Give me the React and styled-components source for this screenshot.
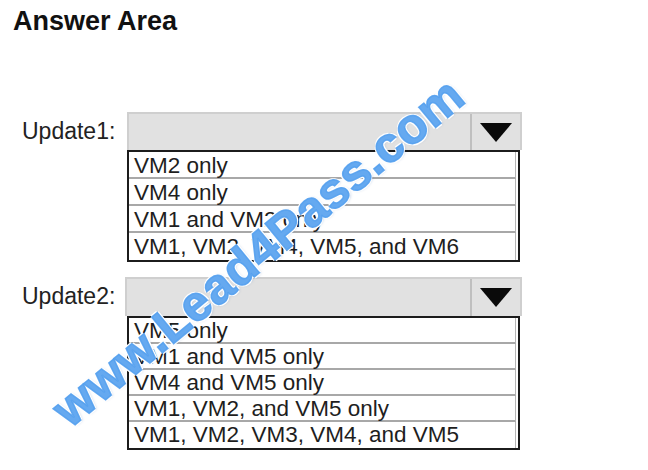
import styled, { createGlobalStyle } from 'styled-components';

const GlobalStyle = createGlobalStyle`
  html, body {
    margin: 0;
    padding: 0;
    background: #ffffff;
  }
  body {
    font-family: "Liberation Sans", Arial, sans-serif;
    color: #1a1a1a;
  }
`;

const Page = styled.div`
  position: relative;
  width: 648px;
  height: 470px;
  overflow: hidden;
  background: #fff;
`;

const Title = styled.h1`
  margin: 0;
  padding: 6px 0 0 13px;
  font-size: 27px;
  font-weight: 700;
  line-height: 31px;
  color: #111;
`;

const Form = styled.div`
  display: flex;
  flex-direction: column;
  gap: 15px;
  padding: 75px 0 0 22px;
`;

const Row = styled.div`
  display: grid;
  grid-template-columns: 105px auto;
  align-items: start;
`;

const Label = styled.div`
  height: 38px;
  display: flex;
  align-items: center;
  font-size: 23px;
  color: #222;
`;

const Select = styled.div`
  display: flex;
  flex-direction: column;
  width: 395px;
`;

const Header = styled.div`
  display: flex;
  height: ${(p) => p.$height}px;
  box-sizing: border-box;
  background: #e1e1e1;
  border: 2px solid #cfcfcf;
  border-bottom: none;
  margin-left: ${(p) => p.$shift}px;
`;

const Field = styled.div`
  flex: 1;
`;

const Toggle = styled.div`
  width: 48px;
  display: flex;
  align-items: center;
  justify-content: center;
  border-left: 2px solid #bfbfbf;
`;

const Arrow = styled.div`
  width: 0;
  height: 0;
  border-left: 16px solid transparent;
  border-right: 16px solid transparent;
  border-top: 19px solid #0a0a0a;
`;

const List = styled.div`
  width: 393px;
  box-sizing: border-box;
  border: 2px solid #1c1c1c;
  background: #fff;
  padding-right: 2px;
`;

const Option = styled.div`
  height: ${(p) => p.$height}px;
  line-height: ${(p) => p.$height}px;
  box-sizing: border-box;
  padding-left: 5px;
  font-size: 22.5px;
  color: #1e1e1e;
  white-space: nowrap;
  border-right: 1px solid #b5b5b5;
  border-bottom: 2px solid #a8a8a8;

  &:last-child {
    border-bottom: none;
  }
`;

const Watermark = styled.div`
  position: absolute;
  left: 258px;
  top: 252px;
  transform: translate(-50%, -50%) rotate(-39.5deg);
  font-family: "Liberation Sans", Arial, sans-serif;
  font-weight: 700;
  font-size: 50px;
  letter-spacing: 0.5px;
  white-space: nowrap;
  color: rgba(84, 160, 238, 0.9);
  -webkit-text-stroke: 1.5px rgba(84, 160, 238, 0.9);
  text-shadow:
    2px 0 0 #fff,
    -2px 0 0 #fff,
    0 2px 0 #fff,
    0 -2px 0 #fff,
    1px 1px 3px rgba(40, 90, 160, 0.35);
  pointer-events: none;
`;

const questions = [
  {
    label: 'Update1:',
    headerHeight: 38,
    shift: 0,
    rowHeight: 27,
    options: ['VM2 only', 'VM4 only', 'VM1 and VM2 only', 'VM1, VM2, VM4, VM5, and VM6'],
  },
  {
    label: 'Update2:',
    headerHeight: 39,
    shift: -2,
    rowHeight: 26,
    options: [
      'VM5 only',
      'VM1 and VM5 only',
      'VM4 and VM5 only',
      'VM1, VM2, and VM5 only',
      'VM1, VM2, VM3, VM4, and VM5',
    ],
  },
];

export default function App() {
  return (
    <Page>
      <GlobalStyle />
      <Title>Answer Area</Title>
      <Form>
        {questions.map((q) => (
          <Row key={q.label}>
            <Label>{q.label}</Label>
            <Select>
              <Header $height={q.headerHeight} $shift={q.shift}>
                <Field />
                <Toggle>
                  <Arrow />
                </Toggle>
              </Header>
              <List>
                {q.options.map((opt) => (
                  <Option key={opt} $height={q.rowHeight}>
                    {opt}
                  </Option>
                ))}
              </List>
            </Select>
          </Row>
        ))}
      </Form>
      <Watermark>www.Lead4Pass.com</Watermark>
    </Page>
  );
}
